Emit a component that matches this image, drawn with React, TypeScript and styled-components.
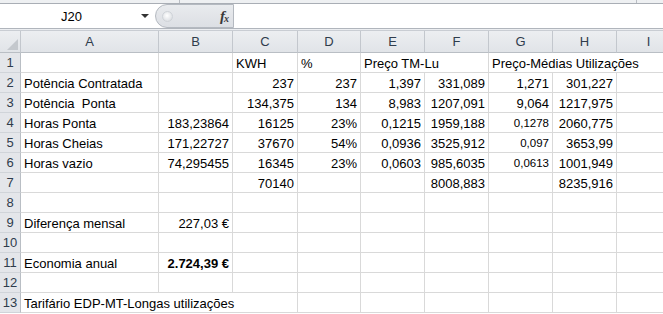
import React from 'react'
import styled, { createGlobalStyle } from 'styled-components'

const GlobalStyle = createGlobalStyle`
  html, body {
    margin: 0;
    padding: 0;
    background: #fff;
    overflow: hidden;
  }
  body {
    font-family: 'Liberation Sans', Arial, sans-serif;
  }
`

const COL_WIDTHS = [138, 74, 65, 63, 64, 64, 64, 64, 64]
const LETTERS = ['A', 'B', 'C', 'D', 'E', 'F', 'G', 'H', 'I']
const GRID = `21px ${COL_WIDTHS.map((w) => `${w}px`).join(' ')}`

type CellData = {
  col: number
  text: string
  num?: boolean
  span?: number
  bold?: boolean
  small?: boolean
}

const ROWS: CellData[][] = [
  [
    { col: 2, text: 'KWH' },
    { col: 3, text: '%' },
    { col: 4, text: 'Preço TM-Lu', span: 2 },
    { col: 6, text: 'Preço-Médias Utilizações', span: 3 },
  ],
  [
    { col: 0, text: 'Potência Contratada' },
    { col: 2, text: '237', num: true },
    { col: 3, text: '237', num: true },
    { col: 4, text: '1,397', num: true },
    { col: 5, text: '331,089', num: true },
    { col: 6, text: '1,271', num: true },
    { col: 7, text: '301,227', num: true },
  ],
  [
    { col: 0, text: 'Potência  Ponta' },
    { col: 2, text: '134,375', num: true },
    { col: 3, text: '134', num: true },
    { col: 4, text: '8,983', num: true },
    { col: 5, text: '1207,091', num: true },
    { col: 6, text: '9,064', num: true },
    { col: 7, text: '1217,975', num: true },
  ],
  [
    { col: 0, text: 'Horas Ponta' },
    { col: 1, text: '183,23864', num: true },
    { col: 2, text: '16125', num: true },
    { col: 3, text: '23%', num: true },
    { col: 4, text: '0,1215', num: true },
    { col: 5, text: '1959,188', num: true },
    { col: 6, text: '0,1278', num: true, small: true },
    { col: 7, text: '2060,775', num: true },
  ],
  [
    { col: 0, text: 'Horas Cheias' },
    { col: 1, text: '171,22727', num: true },
    { col: 2, text: '37670', num: true },
    { col: 3, text: '54%', num: true },
    { col: 4, text: '0,0936', num: true },
    { col: 5, text: '3525,912', num: true },
    { col: 6, text: '0,097', num: true, small: true },
    { col: 7, text: '3653,99', num: true },
  ],
  [
    { col: 0, text: 'Horas vazio' },
    { col: 1, text: '74,295455', num: true },
    { col: 2, text: '16345', num: true },
    { col: 3, text: '23%', num: true },
    { col: 4, text: '0,0603', num: true },
    { col: 5, text: '985,6035', num: true },
    { col: 6, text: '0,0613', num: true, small: true },
    { col: 7, text: '1001,949', num: true },
  ],
  [
    { col: 2, text: '70140', num: true },
    { col: 5, text: '8008,883', num: true },
    { col: 7, text: '8235,916', num: true },
  ],
  [],
  [
    { col: 0, text: 'Diferença mensal' },
    { col: 1, text: '227,03 €', num: true },
  ],
  [],
  [
    { col: 0, text: 'Economia anual' },
    { col: 1, text: '2.724,39 €', num: true, bold: true },
  ],
  [],
  [{ col: 0, text: 'Tarifário EDP-MT-Longas utilizações', span: 3 }],
]

const Window = styled.div`
  width: 663px;
  height: 314px;
  overflow: hidden;
  background: #fff;
`

const RibbonEdge = styled.div`
  display: grid;
  grid-template-columns: 180px 457px 1fr;
  height: 4px;
  box-sizing: border-box;
  background: #eef0f2;
  border-bottom: 1px solid #a9aeb5;
`

const RibbonPart = styled.div`
  border-right: 1px solid #b9bdc3;
`

const FormulaBar = styled.div`
  display: flex;
  align-items: center;
  height: 24px;
  background: #fff;
`

const NameBox = styled.div`
  width: 155px;
  display: flex;
  align-items: center;
  font-size: 13px;
  color: #000;
`

const NameText = styled.span`
  flex: 1;
  text-align: center;
  padding-left: 2px;
`

const DropArrow = styled.span`
  width: 0;
  height: 0;
  margin-right: 6px;
  border-left: 4px solid transparent;
  border-right: 4px solid transparent;
  border-top: 4px solid #333;
`

const FxPill = styled.div`
  width: 79px;
  height: 24px;
  box-sizing: border-box;
  display: flex;
  align-items: center;
  justify-content: space-between;
  padding: 0 5px 0 5px;
  border: 1px solid #b4b9c0;
  border-radius: 12px 0 0 12px;
  background: linear-gradient(#e9ebee, #dcdfe4);
`

const Knob = styled.span`
  width: 9px;
  height: 9px;
  margin-left: 1px;
  border-radius: 50%;
  background: radial-gradient(circle at 45% 40%, #ffffff, #d2d6db);
  border: 1px solid #cfd3d8;
`

const Fx = styled.span`
  font-family: 'Liberation Serif', 'Times New Roman', serif;
  font-style: italic;
  font-weight: bold;
  font-size: 15px;
  color: #3a3a3a;
  letter-spacing: -1px;

  sub {
    font-size: 10px;
    vertical-align: -1px;
  }
`

const FormulaInput = styled.div`
  flex: 1;
  height: 24px;
`

const Gap = styled.div`
  height: 3px;
  box-sizing: border-box;
  border-top: 1px solid #b0b5bc;
  border-bottom: 1px solid #c9cdd3;
  background: #eceef1;
`

const Sheet = styled.div`
  display: grid;
  grid-template-columns: ${GRID};
  grid-template-rows: 22px;
  grid-auto-rows: 20px;
  font-size: 13px;
  color: #000;
`

const Header = styled.div`
  box-sizing: border-box;
  display: flex;
  align-items: center;
  justify-content: center;
  position: relative;
  background: linear-gradient(#eceef1, #e1e4e8);
  border-right: 1px solid #c3c7cd;
  border-bottom: 1px solid #b9bec4;
  color: #2f3c4c;
  font-size: 13px;
`

const CornerMark = styled.span`
  position: absolute;
  right: 2px;
  bottom: 2px;
  width: 0;
  height: 0;
  border-left: 11px solid transparent;
  border-bottom: 11px solid #c4c8cd;
`

const RowNumber = styled.div`
  box-sizing: border-box;
  display: flex;
  align-items: center;
  justify-content: center;
  background: #e4e6ea;
  border-right: 1px solid #b9bec4;
  border-bottom: 1px solid #d0d4d9;
  color: #2f3c4c;
  font-size: 13px;
`

const Cell = styled.div<{ $span: number; $num?: boolean; $bold?: boolean; $small?: boolean }>`
  grid-column: span ${({ $span }) => $span};
  box-sizing: border-box;
  display: flex;
  align-items: center;
  justify-content: ${({ $num }) => ($num ? 'flex-end' : 'flex-start')};
  padding: 1px 3px 0 3px;
  white-space: pre;
  border-right: 1px solid #d9d9d9;
  border-bottom: 1px solid #d9d9d9;
  font-weight: ${({ $bold }) => ($bold ? 'bold' : 'normal')};
  font-size: ${({ $small }) => ($small ? '11.5px' : '13px')};
`

function SheetRow({ index, cells }: { index: number; cells: CellData[] }) {
  const out: React.ReactNode[] = [<RowNumber key="n">{index}</RowNumber>]
  let col = 0
  while (col < LETTERS.length) {
    const c = cells.find((x) => x.col === col)
    const span = c?.span ?? 1
    out.push(
      <Cell key={col} $span={span} $num={c?.num} $bold={c?.bold} $small={c?.small}>
        {c?.text ?? ''}
      </Cell>
    )
    col += span
  }
  return <>{out}</>
}

export default function App() {
  return (
    <Window>
      <GlobalStyle />
      <RibbonEdge>
        <RibbonPart />
        <RibbonPart />
        <div />
      </RibbonEdge>
      <FormulaBar>
        <NameBox>
          <NameText>J20</NameText>
          <DropArrow />
        </NameBox>
        <FxPill>
          <Knob />
          <Fx>
            f<sub>x</sub>
          </Fx>
        </FxPill>
        <FormulaInput />
      </FormulaBar>
      <Gap />
      <Sheet>
        <Header>
          <CornerMark />
        </Header>
        {LETTERS.map((l) => (
          <Header key={l}>{l}</Header>
        ))}
        {ROWS.map((cells, i) => (
          <SheetRow key={i} index={i + 1} cells={cells} />
        ))}
      </Sheet>
    </Window>
  )
}
